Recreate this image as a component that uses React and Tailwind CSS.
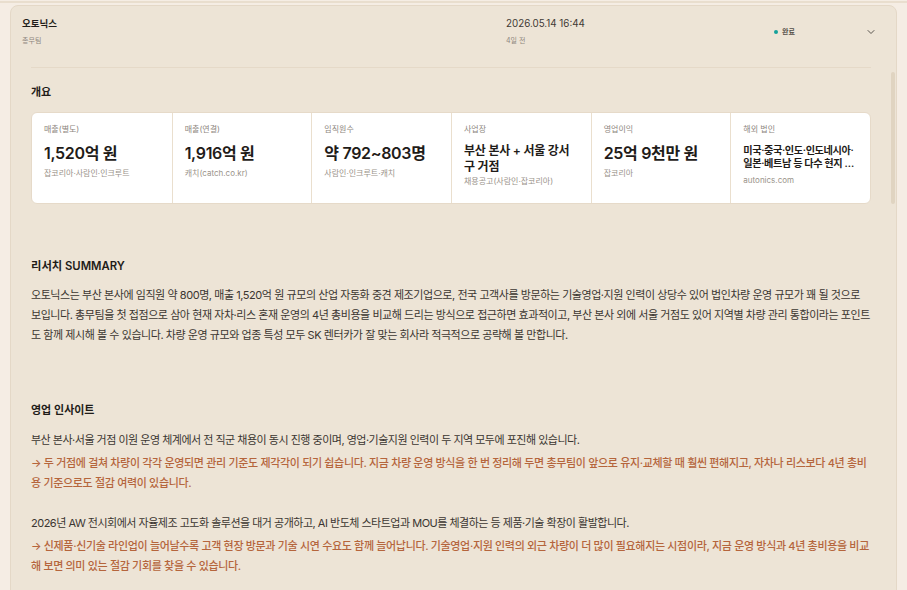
import { ChevronDown } from 'lucide-react';

const stats = [
  { label: '매출(별도)', value: '1,520억 원', source: '잡코리아·사람인·인크루트', size: 'big' },
  { label: '매출(연결)', value: '1,916억 원', source: '캐치(catch.co.kr)', size: 'big' },
  { label: '임직원수', value: '약 792~803명', source: '사람인·인크루트·캐치', size: 'big' },
  { label: '사업장', value: '부산 본사 + 서울 강서구 거점', source: '채용공고(사람인·잡코리아)', size: 'mid' },
  { label: '영업이익', value: '25억 9천만 원', source: '잡코리아', size: 'big' },
  {
    label: '해외 법인',
    value: '미국·중국·인도·인도네시아·일본·베트남 등 다수 현지 법인 운영',
    source: 'autonics.com',
    size: 'small',
  },
];

const valueClass = {
  big: 'mt-2 text-[16px] leading-[20px] tracking-[-0.02em]',
  mid: 'mt-[8px] text-[12px] leading-[16px] tracking-[-0.02em]',
  small: 'mt-[9px] text-[10.2px] leading-[13px] tracking-[-0.04em] line-clamp-2',
};

const sourceClass = {
  big: 'mt-1',
  mid: 'mt-0',
  small: 'mt-[4px]',
};

const insights = [
  {
    text: '부산 본사·서울 거점 이원 운영 체계에서 전 직군 채용이 동시 진행 중이며, 영업·기술지원 인력이 두 지역 모두에 포진해 있습니다.',
    point:
      '→ 두 거점에 걸쳐 차량이 각각 운영되면 관리 기준도 제각각이 되기 쉽습니다. 지금 차량 운영 방식을 한 번 정리해 두면 총무팀이 앞으로 유지·교체할 때 훨씬 편해지고, 자차나 리스보다 4년 총비용 기준으로도 절감 여력이 있습니다.',
  },
  {
    text: '2026년 AW 전시회에서 자율제조 고도화 솔루션을 대거 공개하고, AI 반도체 스타트업과 MOU를 체결하는 등 제품·기술 확장이 활발합니다.',
    point:
      '→ 신제품·신기술 라인업이 늘어날수록 고객 현장 방문과 기술 시연 수요도 함께 늘어납니다. 기술영업·지원 인력의 외근 차량이 더 많이 필요해지는 시점이라, 지금 운영 방식과 4년 총비용을 비교해 보면 의미 있는 절감 기회를 찾을 수 있습니다.',
  },
];

function StatCell({ item, first }) {
  return (
    <div className={`px-3 pt-[10px] ${first ? '' : 'border-l border-[#eadfce]'}`}>
      <div className="text-[8px] leading-[12px] text-[#8d867e]">{item.label}</div>
      <div className={`font-semibold text-[#1f1c19] ${valueClass[item.size]}`}>{item.value}</div>
      <div className={`text-[8px] leading-[12px] text-[#9a938a] ${sourceClass[item.size]}`}>{item.source}</div>
    </div>
  );
}

export default function App() {
  return (
    <div className="h-[590px] overflow-hidden bg-[#f5ede4] pt-px font-['Inter','Noto_Sans_CJK_KR',sans-serif]">
      <div className="h-[2px] bg-[#e9dece]" />

      <div className="relative mx-[10px] mt-[2px] rounded-lg border border-[#e4d8c7] bg-[#ede4d6]">
        {/* header row */}
        <div className="grid grid-cols-[484px_268px_1fr_auto] items-center pl-[11px] pr-[19px] pt-3 pb-[21px]">
          <div>
            <div className="text-[9.5px] font-bold leading-[12px] text-[#1f1c19]">오토닉스</div>
            <div className="mt-[6px] text-[7px] leading-[10px] text-[#8d867e]">총무팀</div>
          </div>
          <div>
            <div className="text-[9.8px] leading-[12px] text-[#3f3a35]">2026.05.14 16:44</div>
            <div className="mt-[6px] text-[7px] leading-[10px] text-[#8d867e]">4일 전</div>
          </div>
          <div className="flex items-center gap-[4px]">
            <span className="h-[4px] w-[4px] rounded-full bg-[#14a19a]" />
            <span className="text-[7px] font-bold leading-[10px] text-[#55504a]">완료</span>
          </div>
          <ChevronDown size={12} strokeWidth={2} className="text-[#5a554f]" />
        </div>

        {/* detail body */}
        <div className="relative pl-5 pr-[25px]">
          <div className="absolute right-px top-[5px] h-[132px] w-[4px] rounded-full bg-[#e0d4c1]" />

          <div className="border-t border-[#e5d9c8] pt-4 pb-12">
            <h3 className="text-[11px] font-semibold leading-[16px] text-[#1f1c19]">개요</h3>
            <div className="mt-3 grid h-[92px] grid-cols-6 overflow-hidden rounded-md border border-[#e6dac9] bg-white">
              {stats.map((item, i) => (
                <StatCell key={item.label} item={item} first={i === 0} />
              ))}
            </div>

            <h3 className="mt-[54px] text-[11.3px] font-semibold leading-[16px] text-[#1f1c19]">
              리서치 SUMMARY
            </h3>
            <p className="mt-[11px] text-[11px] leading-[20px] tracking-[-0.04em] text-[#3b3631]">
              오토닉스는 부산 본사에 임직원 약 800명, 매출 1,520억 원 규모의 산업 자동화 중견 제조기업으로, 전국 고객사를 방문하는 기술영업·지원 인력이 상당수 있어 법인차량 운영 규모가 꽤 될 것으로 보입니다. 총무팀을 첫 접점으로 삼아 현재 자차·리스 혼재 운영의 4년 총비용을 비교해 드리는 방식으로 접근하면 효과적이고, 부산 본사 외에 서울 거점도 있어 지역별 차량 관리 통합이라는 포인트도 함께 제시해 볼 수 있습니다. 차량 운영 규모와 업종 특성 모두 SK 렌터카가 잘 맞는 회사라 적극적으로 공략해 볼 만합니다.
            </p>

            <h3 className="mt-[57px] text-[11px] font-semibold leading-[16px] text-[#1f1c19]">영업 인사이트</h3>
            <div className="mt-3 flex flex-col gap-5">
              {insights.map((row) => (
                <div key={row.text} className="text-[11px] leading-[20px]">
                  <p className="tracking-[-0.045em] text-[#3b3631]">{row.text}</p>
                  <p className="mt-[3px] font-medium tracking-[-0.03em] text-[#b5653c]">{row.point}</p>
                </div>
              ))}
            </div>
          </div>
        </div>
      </div>
    </div>
  );
}
